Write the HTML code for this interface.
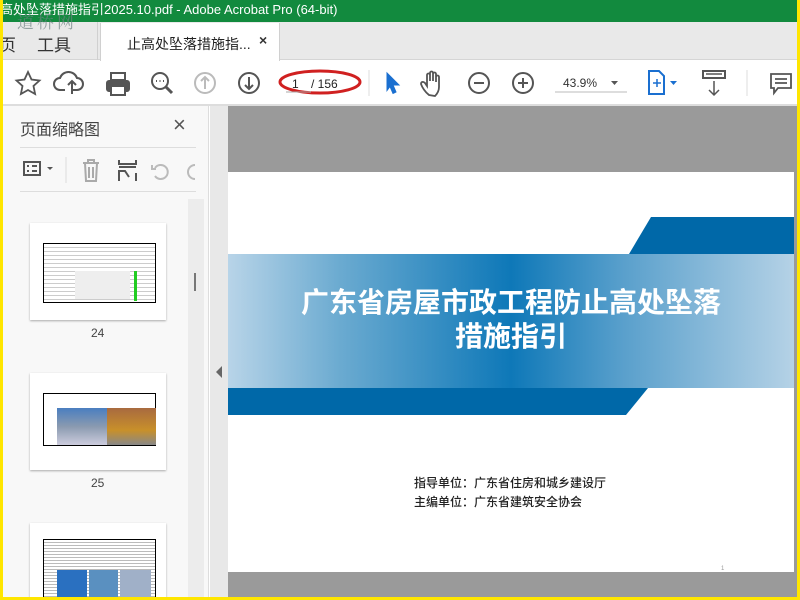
<!DOCTYPE html>
<html><head><meta charset="utf-8"><style>
*{margin:0;padding:0;box-sizing:border-box}
body{width:800px;height:600px;overflow:hidden;background:#ffe600;position:relative;font-family:"Liberation Sans","Noto Sans CJK SC",sans-serif}
.a{position:absolute}
</style></head><body>
<div class="a" style="left:3px;top:0;width:794px;height:597px;background:#fff;overflow:hidden">
<div class="a" style="left:-3px;top:0;width:800px;height:22px;background:#128a3e;color:#fff;font-size:13px;line-height:20px;white-space:nowrap">高处坠落措施指引2025.10.pdf - Adobe Acrobat Pro (64-bit)</div>
<div class="a" style="left:0;top:22px;width:794px;height:38px;background:#e9e9e9;border-bottom:1px solid #d5d5d5"></div>
<div class="a" style="left:0;top:22px;width:95px;height:38px;border-right:1px solid #d0d0d0"></div>
<div class="a" style="left:14px;top:8px;color:rgba(110,130,130,.7);font-size:17px;font-family:'Noto Serif CJK SC',serif;letter-spacing:3px">道桥网</div>
<div class="a" style="left:-4px;top:31px;font-size:17px;color:#333">页</div>
<div class="a" style="left:34px;top:31px;font-size:17px;color:#333">工具</div>
<div class="a" style="left:97px;top:23px;width:180px;height:38px;background:#fff;border-left:1px solid #d0d0d0;border-right:1px solid #d0d0d0"></div>
<div class="a" style="left:124px;top:34px;font-size:14px;color:#222">止高处坠落措施指...</div>
<div class="a" style="left:256px;top:32px;font-size:14px;color:#333;font-weight:bold">×</div>
<div class="a" style="left:0;top:104px;width:794px;height:2px;background:#ddd"></div>
<svg class="a" style="left:0;top:62px" width="794" height="42" viewBox="0 0 794 42">
<g stroke="#555" fill="none" stroke-width="2">
<path d="M25 10l3.5 7.5 8 1-6 5.5 1.6 8L25 28l-7.1 4 1.6-8-6-5.5 8-1z" stroke-width="1.8"/>
<path d="M62 28h-5a6 6 0 010-12 9 9 0 0117 0 6 6 0 010 12h-5M69 32V19m-4 4l4-4 4 4"/>
<rect x="104" y="19" width="22" height="10" rx="2" fill="#555"/><rect x="108" y="11" width="14" height="7"/><rect x="108" y="24" width="14" height="9" fill="#fff"/>
<circle cx="157" cy="19" r="8"/><path d="M163 25l6 6" stroke-width="3"/><path d="M153 19h1m2.5 0h1m2.5 0h1"/>
<circle cx="202" cy="21" r="10" stroke="#bbb"/><path d="M202 27V15m-4 4l4-4 4 4" stroke="#bbb"/>
<circle cx="246" cy="21" r="10"/><path d="M246 15v12m-4-4l4 4 4-4"/>
<ellipse cx="317" cy="20" rx="40" ry="11" stroke="#d02020" stroke-width="3"/>
<path d="M283 30h25" stroke="#aaa" stroke-width="1"/>
<path d="M366 8v26" stroke="#ddd" stroke-width="1"/>
<path d="M384 11l12 12-6 0 3 7-3 1.5-3-7-3 4z" fill="#1a6fd0" stroke="#1a6fd0" stroke-width="1"/>
<path d="M426 33c-4-3-7-8-8-11 0-2 2-3 4-1l2 3V13c0-2 3-2 3 0v6-8c0-2 3-2 3 0v8-7c0-2 3-2 3 0v8-5c0-2 3-2 3 0v10c0 4-2 7-4 9z" stroke-width="1.8"/>
<circle cx="476" cy="21" r="10"/><path d="M471 21h10"/>
<circle cx="520" cy="21" r="10"/><path d="M515 21h10M520 16v10"/>
<path d="M552 30h72" stroke="#bbb" stroke-width="1"/>
<path d="M608 19l3.5 4 3.5-4z" fill="#555" stroke="none"/>
<path d="M646 9h10l5 5v18h-15z" stroke="#1a6fd0"/><path d="M650 21h8M654 17v8" stroke="#1a6fd0" stroke-width="1.5"/>
<path d="M667 19l3.5 4 3.5-4z" fill="#1a6fd0" stroke="none"/>
<rect x="700" y="9" width="22" height="7"/><path d="M711 19v14m-5-5l5 5 5-5M703 12h16" stroke-width="1.5"/>
<path d="M744 8v26" stroke="#ddd" stroke-width="1"/>
<path d="M768 12h20v14h-13l-4 5v-5h-3z M772 17h12M772 21h12" stroke-width="1.8"/>
</g>
<text x="289" y="26" font-size="12" fill="#222" font-family="Liberation Sans">1</text>
<text x="308" y="26" font-size="12" fill="#222" font-family="Liberation Sans">/ 156</text>
<text x="560" y="25" font-size="12" fill="#333" font-family="Liberation Sans">43.9%</text>
</svg>
<div class="a" style="left:0;top:106px;width:206px;height:491px;background:#f8f8f8;border-right:1px solid #ddd"></div>
<div class="a" style="left:17px;top:116px;font-size:16px;color:#444">页面缩略图</div>
<div class="a" style="left:170px;top:112px;font-size:22px;color:#555">×</div>
<div class="a" style="left:17px;top:147px;width:176px;height:1px;background:#ddd"></div>
<div class="a" style="left:17px;top:191px;width:176px;height:1px;background:#ddd"></div>
<svg class="a" style="left:17px;top:155px" width="180" height="30"><g fill="none" stroke="#555" stroke-width="2">
<rect x="4" y="7" width="16" height="13"/><path d="M7 11h2m3 0h5M7 16h2m3 0h5"/>
<path d="M27 12l3 3 3-3z" fill="#555" stroke="none"/>
<path d="M46 2v26" stroke="#ddd" stroke-width="1"/>
<g stroke="#aaa"><path d="M63 8h16M68 8V5h6v3M65 8l1 18h10l1-18M69 12v11m4-11v11"/></g>
<path d="M99 5v4h17V5M99 12h17M99 26V16h6l4 6M116 26v-8" stroke="#555"/>
<g stroke="#bbb"><path d="M135 21a7 7 0 1 0 0-8M132 10v4h4"/><path d="M175 10a7 7 0 0 0 0 14"/></g>
</g></svg>
<div class="a" style="left:185px;top:199px;width:16px;height:398px;background:#ececec"></div>
<div class="a" style="left:191px;top:273px;width:2px;height:18px;background:#777"></div>
<div class="a" style="left:27px;top:223px;width:136px;height:97px;background:#fff;box-shadow:0 1px 2px #aaa">
<div class="a" style="left:13px;top:20px;width:113px;height:60px;border:1px solid #000;background:repeating-linear-gradient(#fff 0 3px,#ccc 3px 4px)"></div>
<div class="a" style="left:45px;top:48px;width:55px;height:28px;background:#eee"></div>
<div class="a" style="left:104px;top:48px;width:3px;height:30px;background:#2c2"></div></div>
<div class="a" style="left:88px;top:326px;font-size:12px;color:#444">24</div>
<div class="a" style="left:27px;top:373px;width:136px;height:97px;background:#fff;box-shadow:0 1px 2px #aaa">
<div class="a" style="left:13px;top:20px;width:113px;height:53px;border:1px solid #000;background:#fff"></div>
<div class="a" style="left:27px;top:35px;width:50px;height:37px;background:linear-gradient(#4a7ec0,#8a9ab0 50%,#ccd)"></div>
<div class="a" style="left:77px;top:35px;width:49px;height:37px;background:linear-gradient(#a86a40,#c8902a 60%,#888)"></div></div>
<div class="a" style="left:88px;top:476px;font-size:12px;color:#444">25</div>
<div class="a" style="left:27px;top:523px;width:136px;height:80px;background:#fff;box-shadow:0 1px 2px #aaa">
<div class="a" style="left:13px;top:16px;width:113px;height:64px;border:1px solid #000;background:repeating-linear-gradient(#fff 0 2px,#bbb 2px 3px)"></div>
<div class="a" style="left:27px;top:47px;width:30px;height:30px;background:#2a70c0"></div>
<div class="a" style="left:59px;top:47px;width:29px;height:30px;background:#5a90c0"></div>
<div class="a" style="left:90px;top:47px;width:31px;height:30px;background:#a0b0c8"></div></div>
<div class="a" style="left:207px;top:106px;width:18px;height:491px;background:#e8e8e8"></div>
<div class="a" style="left:213px;top:366px;width:0;height:0;border-top:6px solid transparent;border-bottom:6px solid transparent;border-right:6px solid #666"></div>
<div class="a" style="left:225px;top:106px;width:569px;height:491px;background:#9a9a9a"></div>
<div class="a" style="left:225px;top:172px;width:566px;height:400px;background:#fff;overflow:hidden">
<div class="a" style="left:401px;top:45px;width:180px;height:37px;background:#0068a8;clip-path:polygon(22px 0,100% 0,100% 100%,0 100%)"></div>
<div class="a" style="left:0;top:82px;width:566px;height:134px;background:linear-gradient(90deg,#b8d4e8 0%,#6aaad0 20%,#0e78b8 50%,#5aa0cc 70%,#b5d2e6 100%)"></div>
<div class="a" style="left:0;top:216px;width:420px;height:27px;background:#0068a8;clip-path:polygon(0 0,100% 0,calc(100% - 22px) 100%,0 100%)"></div>
<div class="a" style="left:0;top:112px;width:566px;text-align:center;color:#fff;font-weight:bold;font-size:28px;line-height:34px;font-family:'Noto Sans CJK SC',sans-serif">广东省房屋市政工程防止高处坠落<br>措施指引</div>
<div class="a" style="left:186px;top:301px;font-size:12px;line-height:19px;color:#222;font-weight:500;font-family:'Noto Sans CJK SC',sans-serif">指导单位：广东省住房和城乡建设厅<br>主编单位：广东省建筑安全协会</div>
<div class="a" style="left:493px;top:394px;font-size:6px;color:#999">1</div>
</div>
</div>
</body></html>
